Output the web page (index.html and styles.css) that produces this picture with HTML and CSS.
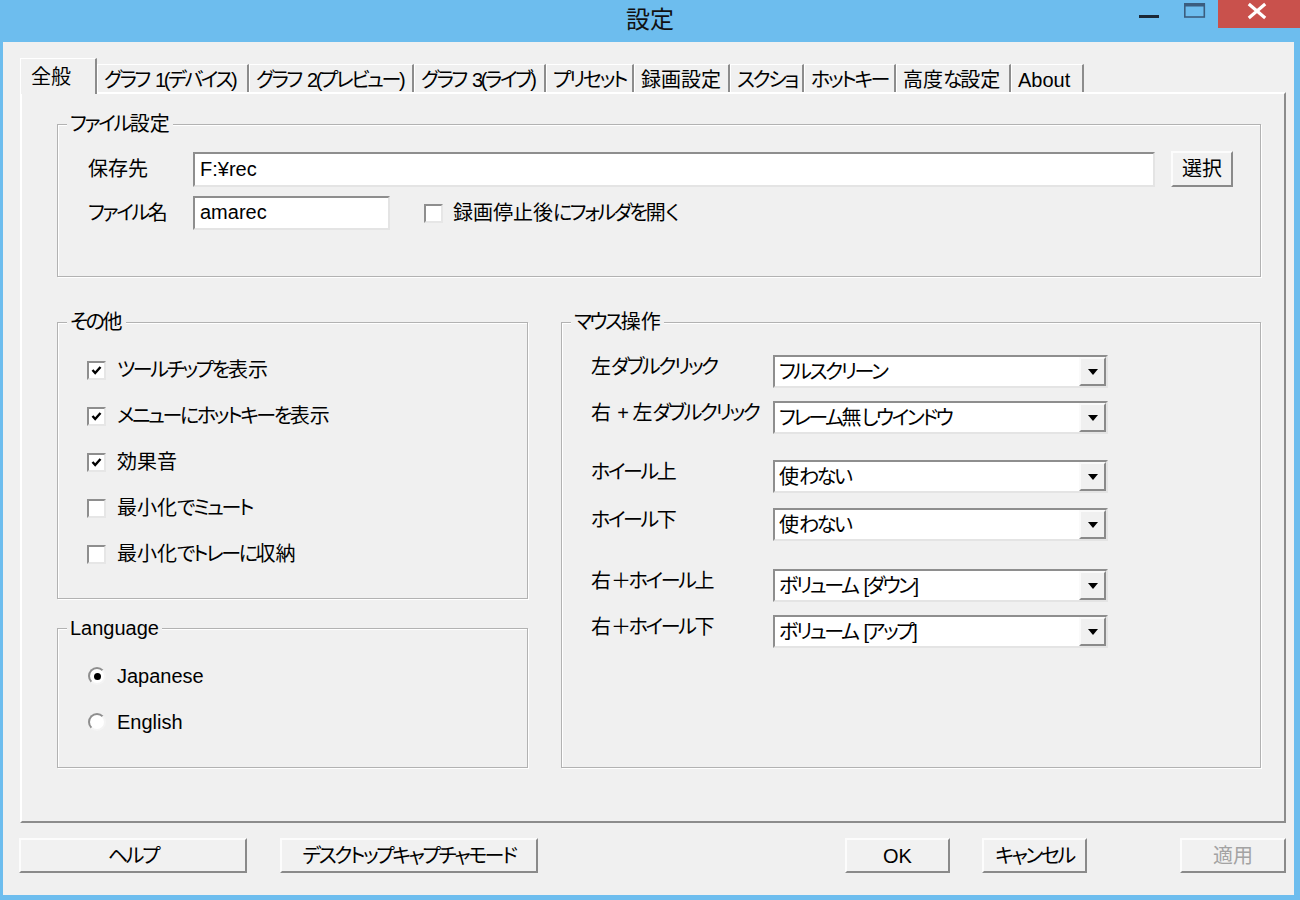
FILE: index.html
```html
<!DOCTYPE html>
<html lang="ja">
<head>
<meta charset="utf-8">
<title>設定</title>
<link rel="stylesheet" href="styles.css">
</head>
<body>
<div class="window">
  <header class="titlebar">
    <div class="tb-spacer"></div>
    <div class="tb-title kj">設定</div>
    <div class="tb-controls">
      <div class="tb-btn"><svg width="46" height="28" viewBox="0 0 46 28"><rect x="13" y="15" width="20" height="3" fill="#1b2836"/></svg></div>
      <div class="tb-btn"><svg width="46" height="28" viewBox="0 0 46 28"><rect x="12.8" y="4" width="19.5" height="13" fill="none" stroke="#3b5d7e" stroke-width="1.6"/><rect x="12" y="3" width="21" height="3.5" fill="#3b5d7e"/></svg></div>
      <div class="tb-btn tb-close"><svg width="82" height="28" viewBox="0 0 82 28"><path d="M32 5 L46 17 M46 5 L32 17" stroke="#fff" stroke-width="3.2" stroke-linecap="square"/></svg></div>
    </div>
  </header>
  <div class="client">
    <div class="tabs">
      <div class="tab active kj">全般</div>
      <div class="tab">グラフ 1(デバイス)</div>
      <div class="tab">グラフ 2(プレビュー)</div>
      <div class="tab">グラフ 3(ライブ)</div>
      <div class="tab">プリセット</div>
      <div class="tab kj">録画設定</div>
      <div class="tab">スクショ</div>
      <div class="tab">ホットキー</div>
      <div class="tab"><span class="kj">高度</span>な<span class="kj">設定</span></div>
      <div class="tab lat">About</div>
    </div>
    <div class="pane">
      <fieldset class="group g-file">
        <legend>ファイル<span class="kj">設定</span></legend>
        <div class="file-row">
          <span class="lbl kj">保存先</span>
          <div class="edit edit-path lat">F:¥rec</div>
          <div class="btn btn-select kj">選択</div>
        </div>
        <div class="file-row row2">
          <span class="lbl">ファイル<span class="kj">名</span></span>
          <div class="edit edit-name lat">amarec</div>
          <div class="opt opt-inline"><span class="cb"></span><span><span class="kj">録画停止後</span>にフォルダを<span class="kj">開</span>く</span></div>
        </div>
      </fieldset>
      <div class="middle">
        <div class="left-col">
          <fieldset class="group g-other">
            <legend>その<span class="kj">他</span></legend>
            <div class="opt-list">
              <div class="opt"><span class="cb"><svg width="15" height="15" viewBox="0 0 15 15"><path d="M3.5 7 L6.2 10 L11.5 4" fill="none" stroke="#000" stroke-width="2.4"/></svg></span><span>ツールチップを<span class="kj">表示</span></span></div>
              <div class="opt"><span class="cb"><svg width="15" height="15" viewBox="0 0 15 15"><path d="M3.5 7 L6.2 10 L11.5 4" fill="none" stroke="#000" stroke-width="2.4"/></svg></span><span>メニューにホットキーを<span class="kj">表示</span></span></div>
              <div class="opt"><span class="cb"><svg width="15" height="15" viewBox="0 0 15 15"><path d="M3.5 7 L6.2 10 L11.5 4" fill="none" stroke="#000" stroke-width="2.4"/></svg></span><span class="kj">効果音</span></div>
              <div class="opt"><span class="cb"></span><span><span class="kj">最小化</span>でミュート</span></div>
              <div class="opt"><span class="cb"></span><span><span class="kj">最小化</span>でトレーに<span class="kj">収納</span></span></div>
            </div>
          </fieldset>
          <fieldset class="group g-lang">
            <legend class="lat">Language</legend>
            <div class="opt-list radios">
              <div class="opt"><span class="rb on"></span><span class="lat">Japanese</span></div>
              <div class="opt"><span class="rb"></span><span class="lat">English</span></div>
            </div>
          </fieldset>
        </div>
        <fieldset class="group g-mouse">
          <legend>マウス<span class="kj">操作</span></legend>
          <div class="mouse-list">
            <div class="m-row first"><span class="m-lbl"><span class="kj">左</span>ダブルクリック</span><div class="combo"><span class="combo-text">フルスクリーン</span><span class="combo-btn"><svg width="12" height="8" viewBox="0 0 12 8"><path d="M1 1 H11 L6 7 Z" fill="#000"/></svg></span></div></div>
            <div class="m-row"><span class="m-lbl"><span class="kj">右</span> + <span class="kj">左</span>ダブルクリック</span><div class="combo"><span class="combo-text">フレーム<span class="kj">無</span>しウインドウ</span><span class="combo-btn"><svg width="12" height="8" viewBox="0 0 12 8"><path d="M1 1 H11 L6 7 Z" fill="#000"/></svg></span></div></div>
            <div class="m-row sep"><span class="m-lbl">ホイール<span class="kj">上</span></span><div class="combo"><span class="combo-text"><span class="kj">使</span>わない</span><span class="combo-btn"><svg width="12" height="8" viewBox="0 0 12 8"><path d="M1 1 H11 L6 7 Z" fill="#000"/></svg></span></div></div>
            <div class="m-row mid"><span class="m-lbl">ホイール<span class="kj">下</span></span><div class="combo"><span class="combo-text"><span class="kj">使</span>わない</span><span class="combo-btn"><svg width="12" height="8" viewBox="0 0 12 8"><path d="M1 1 H11 L6 7 Z" fill="#000"/></svg></span></div></div>
            <div class="m-row sep2"><span class="m-lbl"><span class="kj">右</span>＋ホイール<span class="kj">上</span></span><div class="combo"><span class="combo-text">ボリューム [ダウン]</span><span class="combo-btn"><svg width="12" height="8" viewBox="0 0 12 8"><path d="M1 1 H11 L6 7 Z" fill="#000"/></svg></span></div></div>
            <div class="m-row"><span class="m-lbl"><span class="kj">右</span>＋ホイール<span class="kj">下</span></span><div class="combo"><span class="combo-text">ボリューム [アップ]</span><span class="combo-btn"><svg width="12" height="8" viewBox="0 0 12 8"><path d="M1 1 H11 L6 7 Z" fill="#000"/></svg></span></div></div>
          </div>
        </fieldset>
      </div>
    </div>
    <div class="actions">
      <div class="btn btn-help">ヘルプ</div>
      <div class="btn btn-desk">デスクトップキャプチャモード</div>
      <div class="btn btn-ok lat">OK</div>
      <div class="btn btn-cancel">キャンセル</div>
      <div class="btn btn-apply disabled kj">適用</div>
    </div>
  </div>
</div>
</body>
</html>
```

FILE: styles.css
```css
* { box-sizing: border-box; }
html, body { margin: 0; padding: 0; }
body {
  width: 1300px;
  height: 900px;
  overflow: hidden;
  font-family: "Liberation Sans", "Noto Sans CJK JP", sans-serif;
  font-size: 20px;
  line-height: 24px;
  color: #000;
  font-feature-settings: "palt";
  letter-spacing: -2.4px;
  word-spacing: 3px;
}
.lat, .kj { letter-spacing: 0; }
.window {
  width: 1300px;
  height: 900px;
  background: #6dbdee;
  display: flex;
  flex-direction: column;
}
.titlebar {
  height: 42px;
  display: grid;
  grid-template-columns: 1fr auto 1fr;
  flex: none;
}
.tb-title {
  font-family: "Noto Sans CJK JP", sans-serif;
  font-size: 24px;
  line-height: 36px;
  color: #111;
}
.tb-controls {
  justify-self: end;
  display: flex;
  align-items: flex-start;
}
.tb-btn { width: 46px; height: 28px; display: flex; }
.tb-close { width: 82px; background: #c9514c; }

.client {
  flex: 1;
  margin: 0 6px 5px 3px;
  background: #f0f0f0;
  padding: 16px 8px 0 17px;
  display: flex;
  flex-direction: column;
}

/* Tabs */
.tabs {
  height: 34px;
  display: flex;
  align-items: flex-end;
  flex: none;
}
.tab {
  height: 28px;
  padding: 3px 0 0 6px;
  border-top: 1px solid #fff;
  border-left: 1px solid #fff;
  border-right: 2px solid #8c8c8c;
  white-space: nowrap;
  overflow: hidden;
  background: #f0f0f0;
}
.tab.active {
  height: 36px;
  margin-bottom: -2px;
  padding: 6px 0 0 10px;
  position: relative;
  z-index: 1;
}
.tab:nth-child(1) { width: 77px; }
.tab:nth-child(2) { width: 152px; }
.tab:nth-child(3) { width: 165px; }
.tab:nth-child(4) { width: 132px; }
.tab:nth-child(5) { width: 88px; }
.tab:nth-child(6) { width: 96px; }
.tab:nth-child(7) { width: 74px; }
.tab:nth-child(8) { width: 92px; }
.tab:nth-child(9) { width: 115px; }
.tab:nth-child(10) { width: 73px; }

.pane {
  flex: none;
  height: 731px;
  border: 2px solid;
  border-color: #fff #8c8c8c #8c8c8c #fff;
  padding: 18px 23px 0 35px;
}

/* Group boxes */
.group {
  margin: 0;
  padding: 0;
  min-width: 0;
  border: 1px solid #b2b2b2;
  box-shadow: inset 1px 1px 0 #fff, 1px 1px 0 #fff;
}
.group legend {
  margin-left: 9px;
  padding: 0 3px 0 3px;
  line-height: 24px;
  background: #f0f0f0;
}
.g-file { height: 165px; }
.file-row {
  display: flex;
  align-items: center;
  padding: 0 27px 0 30px;
}
.file-row:first-of-type { margin-top: 15px; }
.row2 { margin-top: 9px; }
.lbl { width: 105px; flex: none; }

.edit {
  background: #fff;
  border: 2px solid;
  border-color: #8e8e8e #e4e4e4 #e4e4e4 #8e8e8e;
  padding: 0 5px;
  line-height: 28px;
  white-space: nowrap;
}
.edit-path { flex: 1; height: 35px; line-height: 30px; }
.edit-name { width: 197px; height: 34px; line-height: 29px; }

.btn {
  background: #f1f1f1;
  border: 2px solid;
  border-color: #fcfcfc #8a8a8a #8a8a8a #fcfcfc;
  display: flex;
  align-items: center;
  justify-content: center;
  white-space: nowrap;
}
.btn-select { width: 62px; height: 36px; margin-left: 16px; }

.opt { display: flex; align-items: center; gap: 11px; white-space: nowrap; }
.opt-inline { margin-left: 34px; gap: 10px; }
.cb {
  width: 19px;
  height: 19px;
  flex: none;
  background: #fff;
  border: 2px solid;
  border-color: #8e8e8e #e6e6e6 #e6e6e6 #8e8e8e;
  display: flex;
  align-items: center;
  justify-content: center;
}
.rb {
  width: 18px;
  height: 18px;
  flex: none;
  border-radius: 50%;
  background: #fff;
  border: 2px solid;
  border-color: #8e8e8e #f4f4f4 #f4f4f4 #8e8e8e;
  display: flex;
  align-items: center;
  justify-content: center;
}
.rb.on::after {
  content: "";
  width: 7px;
  height: 7px;
  border-radius: 50%;
  background: #000;
}

.middle {
  display: flex;
  gap: 33px;
  margin-top: 33px;
}
.left-col {
  width: 471px;
  flex: none;
  display: flex;
  flex-direction: column;
  gap: 17px;
}
.g-other { height: 289px; }
.g-lang { height: 152px; }
.opt-list { padding: 13px 0 0 29px; }
.opt-list .opt { height: 46px; }
.radios { padding-left: 30px; }

.g-mouse { flex: 1; height: 458px; }
.mouse-list { padding-left: 29px; }
.m-row { display: flex; align-items: flex-start; margin-top: 13px; }
.m-row.first { margin-top: 21px; }
.m-row.sep { margin-top: 26px; }
.m-row.mid { margin-top: 15px; }
.m-row.sep2 { margin-top: 28px; }
.m-lbl { width: 182px; flex: none; line-height: 24px; white-space: nowrap; }
.combo {
  width: 335px;
  height: 33px;
  background: #fff;
  border: 2px solid;
  border-color: #8e8e8e #e4e4e4 #e4e4e4 #8e8e8e;
  display: flex;
}
.combo-text { flex: 1; padding-left: 4px; line-height: 30px; white-space: nowrap; }
.combo-btn {
  width: 27px;
  flex: none;
  background: #f0f0f0;
  border: 2px solid;
  border-color: #fafafa #8a8a8a #8a8a8a #fafafa;
  display: flex;
  align-items: center;
  justify-content: center;
}

/* Bottom buttons */
.actions {
  display: flex;
  height: 35px;
  margin-top: 15px;
  flex: none;
}
.btn-help { width: 228px; margin-left: -1px; }
.btn-desk { width: 258px; margin-left: 33px; }
.btn-ok { width: 105px; margin-left: auto; }
.btn-cancel { width: 105px; margin-left: 32px; }
.btn-apply { width: 106px; margin-left: 93px; }
.btn.disabled { color: #a3a3a3; }
```
